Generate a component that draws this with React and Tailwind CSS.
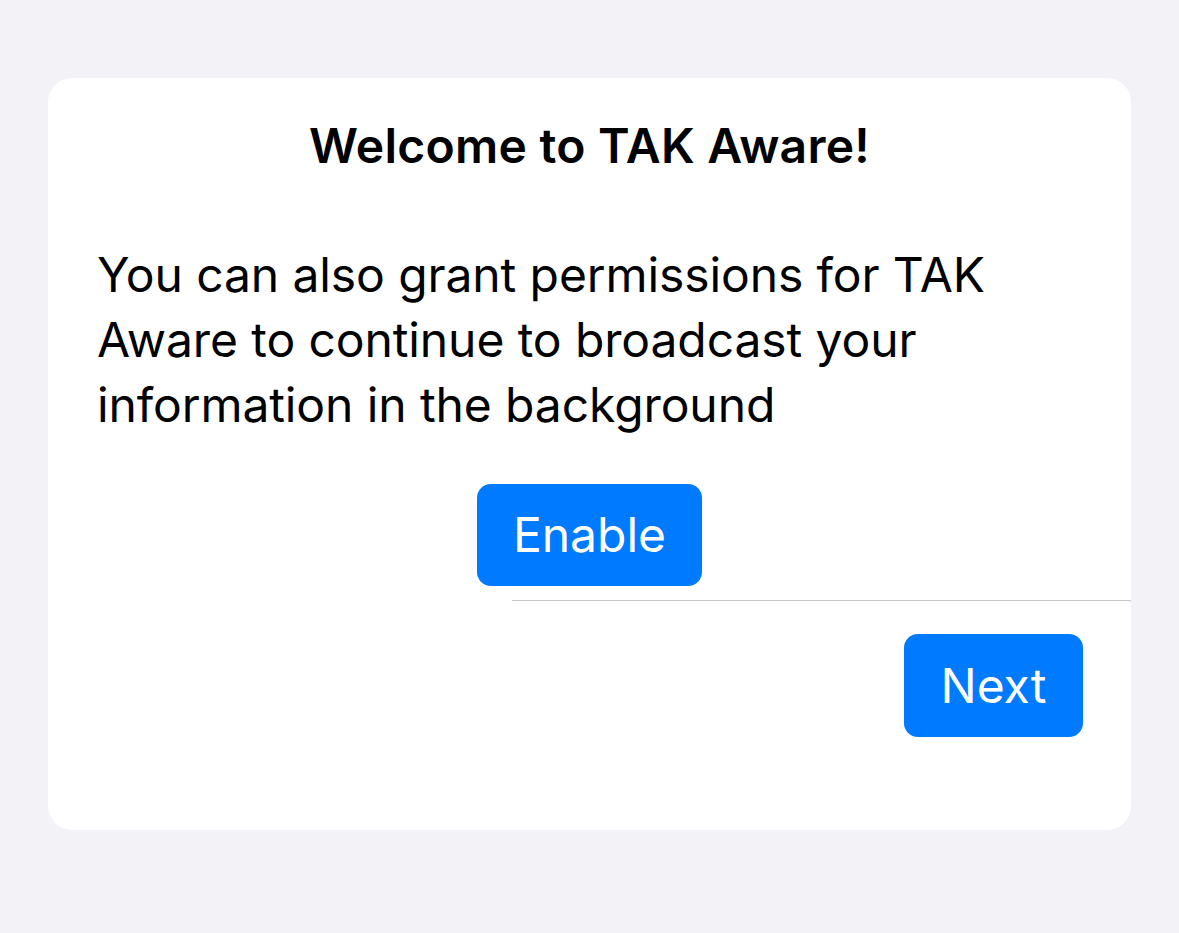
export default function App() {
  return (
    <div className="min-h-screen w-full bg-[#f2f2f7] pt-[78px] px-[48px]" style={{ fontFamily: 'Inter, "Noto Sans", sans-serif' }}>
      <div className="h-[752px] rounded-[24px] bg-white flex flex-col">
        <h1 className="mt-[38px] text-center text-[48px] leading-[60px] font-semibold text-black tracking-[0.25px]">
          Welcome to TAK Aware!
        </h1>
        <p className="mt-[66px] px-[49px] text-[48px] leading-[65px] text-black tracking-[-0.1px]">
          You can also grant permissions for TAK
          <br />
          Aware to continue to broadcast your
          <br />
          information in the background
        </p>
        <div className="mt-[47px] flex justify-center">
          <button className="h-[102px] w-[225px] rounded-[14px] bg-[#007aff] text-white text-[48px] tracking-[0px]">
            Enable
          </button>
        </div>
        <div className="mt-[14px] ml-[464px] h-px bg-[#c6c6c8]" />
        <div className="mt-[33px] flex justify-end pr-[48px]">
          <button className="h-[103px] w-[179px] rounded-[14px] bg-[#007aff] text-white text-[48px] tracking-[0px]">
            Next
          </button>
        </div>
      </div>
    </div>
  );
}
